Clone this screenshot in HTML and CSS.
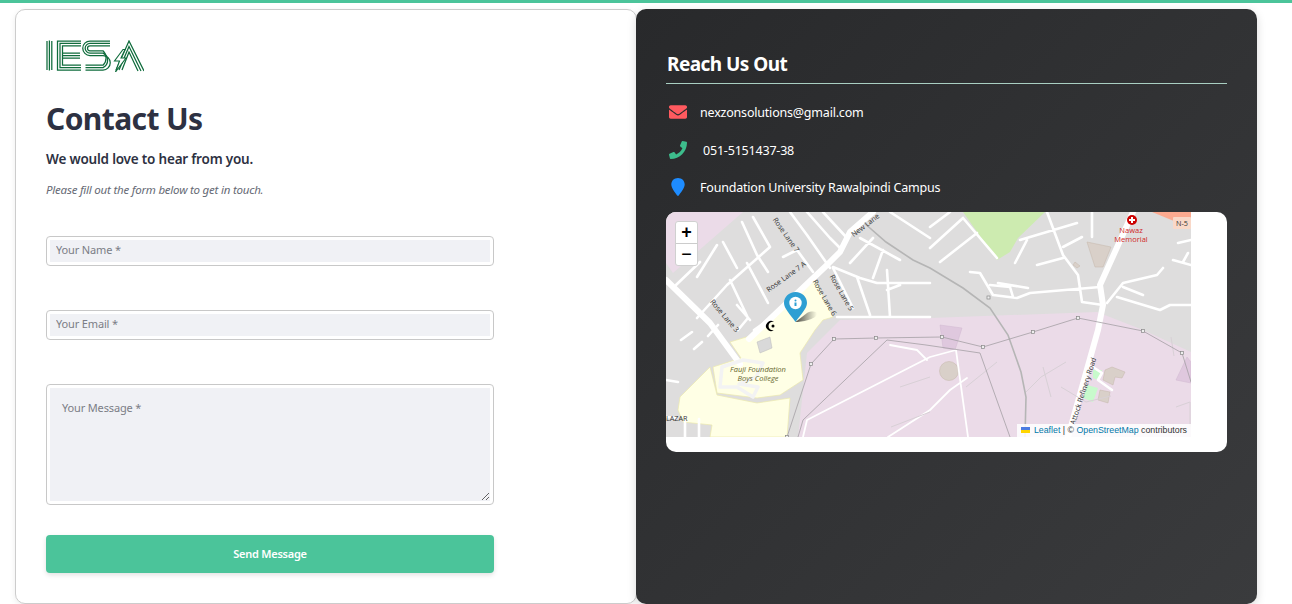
FILE: index.html
```html
<!DOCTYPE html>
<html lang="en">
<head>
<meta charset="utf-8">
<title>Contact Us</title>
<link rel="stylesheet" href="styles.css">
</head>
<body>
<main class="page">
  <section class="form-card">
    <svg class="logo" viewBox="0 0 98 32" width="98" height="32" aria-label="IESA">
      <g class="logo-lines">
        <path d="M1 1v29M3.400 .5v30M5.800 1v29"/>
        <path d="M35 1H11.500v29H35M35 3.400H14v24.200H35M35 5.800H16.500v19.400H35"/>
        <path d="M34 13.200H16.500M34 15.600H16.500M34 18H16.500"/>
        <path d="M64 1H44a5.500 5.500 0 0 0 0 14.500h13a5.500 5.500 0 0 1 0 14.500H39.500"/>
        <path d="M64 3.400H44a3.200 3.200 0 0 0 0 9.700h13a8 8 0 0 1 0 14.500H39.500"/>
        <path d="M64 5.800H44a1 1 0 0 0 0 5h13a10 10 0 0 1 0 14.400H39.500"/>
        <path d="M70 30 83 1 98 31M73 30 83 6.500 95 31M76 30 83 12 92 31"/>
      </g>
      <path class="logo-bolt" d="M77 9.500 68.500 21h5L69.500 32 80 18h-5l4-8.500z"/>
    </svg>
    <h1 class="title">Contact Us</h1>
    <p class="lead">We would love to hear from you.</p>
    <p class="note">Please fill out the form below to get in touch.</p>
    <form class="form">
      <div class="field field-name"><input class="control" type="text" placeholder="Your Name *"></div>
      <div class="field field-email"><input class="control" type="email" placeholder="Your Email *"></div>
      <div class="field field-message"><textarea class="control control-area" placeholder="Your Message *"></textarea></div>
      <button class="send" type="button">Send Message</button>
    </form>
  </section>

  <section class="info-card">
    <h2 class="info-title">Reach Us Out</h2>
    <ul class="contacts">
      <li class="contact">
        <svg class="icon icon-mail" viewBox="0 0 512 512" width="18" height="18"><path d="M502.300 190.800c3.900-3.100 9.700-.2 9.700 4.700V400c0 26.500-21.500 48-48 48H48c-26.500 0-48-21.500-48-48V195.600c0-5 5.700-7.800 9.700-4.700 22.400 17.400 52.100 39.500 154.100 113.600 21.100 15.400 56.700 47.800 92.200 47.600 35.700.3 72-32.800 92.300-47.600 102-74.100 131.600-96.300 154-113.700zM256 320c23.200.4 56.600-29.200 73.400-41.400 132.700-96.300 142.800-104.700 173.400-128.700 5.800-4.500 9.200-11.500 9.200-18.900v-19c0-26.500-21.500-48-48-48H48C21.500 64 0 85.500 0 112v19c0 7.400 3.400 14.300 9.200 18.900 30.600 23.900 40.700 32.400 173.400 128.700 16.800 12.200 50.200 41.800 73.400 41.400z"/></svg>
        <span>nexzonsolutions@gmail.com</span>
      </li>
      <li class="contact contact-phone">
        <svg class="icon icon-phone" viewBox="0 0 512 512" width="18" height="18"><path d="M493.400 24.600l-104-24c-11.300-2.600-22.900 3.300-27.500 13.900l-48 112c-4.200 9.800-1.400 21.300 6.900 28l60.600 49.600c-36 76.700-98.900 140.500-177.200 177.200l-49.600-60.600c-6.800-8.300-18.200-11.100-28-6.900l-112 48C3.900 366.500-2 378.100.6 389.400l24 104C27.100 504.200 36.700 512 48 512c256.100 0 464-207.500 464-464 0-11.200-7.700-20.900-18.600-23.400z"/></svg>
        <span>051-5151437-38</span>
      </li>
      <li class="contact contact-place">
        <svg class="icon icon-pin" viewBox="0 0 18 18" width="18" height="18"><path d="M9 0C5.200 0 2.300 2.800 2.300 6.500c0 3.400 3.900 8.200 5.800 10.900.4.600 1.300.6 1.700 0 1.900-2.700 5.900-7.500 5.900-10.900C15.700 2.800 12.800 0 9 0z"/></svg>
        <span>Foundation University Rawalpindi Campus</span>
      </li>
    </ul>
    <div class="map-box">
      <div class="map">
        <svg class="tiles" viewBox="0 0 525 225" width="525" height="225">
          <defs>
            <linearGradient id="shade" x1="0" x2="1" y1="0" y2="0">
              <stop offset="0" stop-color="#000" stop-opacity=".7"/>
              <stop offset="1" stop-color="#000" stop-opacity="0"/>
            </linearGradient>
          </defs>
          <rect class="m-base" width="525" height="225"/>
          <path class="m-pink" d="M0 0H77L7 61 0 51z"/>
          <path class="m-pink" d="M174 108 264 106 431 100 477 118 525 140V225H132L141 141z"/>
          <path class="m-green" d="M297 0H379L352 26 344 40 331 48z"/>
          <path class="m-salmon" d="M486 0 525 16V0z"/>
          <path class="m-yellow" d="M87 123 149 68 167 105 157 108 149 118 134 141 137 168 114 183 91 186 51 181 47 155 75 146 64 130z"/>
          <path class="m-yellow" d="M44 155 14 185 12 198 17 210 46 213 44 225H121L124 186 91 191 51 183z"/>
          <path class="m-tan" d="M421 30 445 35 437 55 429 55z"/>
          <path class="m-tan" d="M409 50 414 54 411 56 407 53z"/>
          <path class="m-tan" d="M439 158 446 155 459 160 456 166 449 165 447 173 437 168z"/>
          <path class="m-tan" d="M434 178 444 180 442 191 432 188z"/>
          <circle class="m-tan" cx="283" cy="159" r="9.500"/>
          <path class="m-plum" d="M274 113 296 116 289 138 277 136z"/>
          <path class="m-plum" d="M521 145 510 168 525 171V150z"/>
          <path class="m-lime" d="M427 158 436 158 432 168 427 166z"/>
          <path class="m-lime" d="M421 173 432 176 427 190 417 186z"/>
          <path class="m-rail" d="M197 10 220 30 247 48 264 56 297 76 324 96 342 123 355 160 360 185 359 225"/>
          <g class="m-road">
            <path d="M76 10 91 43 102 60M87 5 104 35M57 30 71 56M31 65 51 33M10 73 34 50M104 35 61 73 31 106M81 51 102 91M64 68 82 106 72 118M71 93 84 108M117 45 131 38 147 60"/>
            <path d="M124 0 141 23 164 56M141 0 164 26 174 36M157 0 181 26M167 55 194 66 211 71 264 71M207 26 184 51M217 38 207 66M194 26 234 48M221 58 224 105M221 78 234 73M167 56 187 96M191 65 204 103M171 105H264M224 0 264 26"/>
            <path d="M264 36 297 6M297 6 331 46M274 50 311 21M264 15 284 0"/>
            <path d="M381 0 397 43 412 63 416 90 437 93M354 28 411 11M361 28 349 51M397 35 416 25M371 53 397 46M304 60 314 61 327 83 351 86 364 81 434 75M324 73 344 75 347 85M332 71 362 76"/>
            <path d="M426 0V25M497 56 491 63 457 71 441 91M457 75 477 83M451 85 494 98 504 93 525 93M507 48 525 53M522 41 517 50M512 31 525 28"/>
            <path d="M427 155 436 161 432 168 446 178"/>
            <path d="M0 168 12 170M0 205 10 206M19 205V225M33 207V225M26 120 15 128M36 130 28 137M52 113 42 124M88 118 108 104"/>
          </g>
          <g class="m-road-thin">
            <path d="M137 225 141 208 264 145 290 138 302 225M222 225 264 198 284 178 301 166M224 133 251 138 261 148"/>
          </g>
          <g class="m-road-thick">
            <path d="M0 68 44 111 74 152"/>
            <path d="M83 127 161 53 174 40 184 20 207 0"/>
            <path d="M467 0 434 73 437 93 432 118 402 225"/>
          </g>
          <path class="m-loop" d="M56 155 54 175 71 175 87 185 92 175 73 172 90 165 97 151 77 148z"/>
          <path class="m-bldg" d="M91 130 104 125 106 136 94 141z"/>
          <path class="m-soft" d="M300 175 331 150M360 180 375 165 400 150M377 155 385 185M395 175 420 190 445 184M510 195 524 190V215M234 175 264 165M225 215 264 200"/>
          <path class="m-soft" d="M505 125 508 144"/>
          <g class="m-power">
            <path d="M121 225 145 152 168 127 210 126 276 125 317 135 367 120 412 106 477 119 516 141 525 170"/>
            <path d="M132 225 137 208 221 128 260 133 314 141 344 225"/>
          </g>
          <g class="m-nodes">
            <rect x="119.500" y="223.500" width="3" height="3"/><rect x="143.500" y="150.500" width="3" height="3"/><rect x="166.500" y="125.500" width="3" height="3"/><rect x="208.500" y="124.500" width="3" height="3"/><rect x="274.500" y="123.500" width="3" height="3"/><rect x="315.500" y="133.500" width="3" height="3"/><rect x="365.500" y="118.500" width="3" height="3"/><rect x="410.500" y="104.500" width="3" height="3"/><rect x="475.500" y="117.500" width="3" height="3"/><rect x="514.500" y="139.500" width="3" height="3"/><rect x="321" y="84" width="3" height="3"/>
          </g>
          <path class="m-crescent" d="M108 110a5 5 0 1 0 0 8 4.200 4.200 0 1 1 0-8z"/>
          <circle class="m-crescent" cx="107" cy="114" r="1.500"/>
          <circle class="m-red" cx="466" cy="8" r="5"/>
          <path class="m-cross" d="M466 5v6M463 8h6"/>
          <text class="m-label m-red-text" x="465" y="21">Nawaz</text>
          <text class="m-label m-red-text" x="465" y="30">Memorial</text>
          <rect class="m-shield" x="507" y="5" width="18" height="12" rx="1"/>
          <text class="m-street" x="510" y="14">N-5</text>
          <text class="m-label m-school" x="92" y="160">Fauji Foundation</text>
          <text class="m-label m-school" x="92" y="169">Boys College</text>
          <text class="m-street" x="0" y="209">LAZAR</text>
          <text class="m-street" transform="translate(109 6) rotate(55)" x="0" y="3">Rose Lane 7</text>
          <text class="m-street" transform="translate(101 78) rotate(-36)" x="0" y="3">Rose Lane 7 A</text>
          <text class="m-street" transform="translate(149 68) rotate(60)" x="0" y="3">Rose Lane 6</text>
          <text class="m-street" transform="translate(166 63) rotate(60)" x="0" y="3">Rose Lane 5</text>
          <text class="m-street" transform="translate(46 88) rotate(50)" x="0" y="3">Rose Lane 3</text>
          <text class="m-street" transform="translate(186 23) rotate(-38)" x="0" y="3">New Lane</text>
          <text class="m-street" transform="translate(406 212) rotate(-72)" x="0" y="3">Attock Refinery Road</text>
        </svg>
        <div class="zoom">
          <span class="zoom-btn">+</span>
          <span class="zoom-btn">−</span>
        </div>
        <svg class="marker" viewBox="0 0 56 34" width="56" height="34">
          <path class="marker-shadow" d="M12.500 30 24 21C28 19 34 19 34 22 34 26 22 30 12.500 30z"/>
          <path class="marker-pin" d="M12.500 0C5.800 0 1 5 1 11c0 5.500 6 11 11.500 19C18 22 24 16.500 24 11 24 5 19.200 0 12.500 0z"/>
          <circle class="marker-hole" cx="12.500" cy="11" r="6.200"/>
          <circle class="marker-i" cx="12.500" cy="8.600" r="1"/>
          <path class="marker-i-bar" d="M12.500 10.500v3.500"/>
        </svg>
        <div class="attribution">
          <svg class="flag" viewBox="0 0 12 8" width="9" height="6"><rect class="flag-b" width="12" height="4"/><rect class="flag-y" y="4" width="12" height="4"/></svg>
          <a class="attr-link">Leaflet</a> <span class="attr-sep">|</span> © <a class="attr-link">OpenStreetMap</a> contributors
        </div>
      </div>
    </div>
  </section>
</main>
</body>
</html>
```

FILE: styles.css
```css
* { box-sizing: border-box; }
html, body { margin: 0; height: 604px; overflow: hidden; background: #fff; }
body { font-family: "Noto Sans", "Open Sans", sans-serif; color: #2d3142; }

.page {
  height: 604px;
  border-top: 3px solid #4bc49a;
  padding: 6px 35px 0 15px;
  display: grid;
  grid-template-columns: 622px 620px;
}

.form-card {
  height: 595px;
  background: #fff;
  border: 1px solid #ccc;
  border-radius: 10px;
  padding: 30px 30px 0;
  box-shadow: 0 2px 6px rgba(0, 0, 0, .08);
}
.info-card {
  height: 595px;
  margin-left: -1px;
  background: linear-gradient(135deg, #28292b 0%, #3a3b3d 100%);
  border-radius: 10px;
  padding: 40px 30px 0;
  color: #fff;
  box-shadow: 0 3px 10px rgba(0, 0, 0, .15);
  position: relative;
}

.logo { display: block; }
.logo-lines { fill: none; stroke: #0f6c3c; stroke-width: 1.250; }
.logo-bolt { fill: #fff; stroke: #0f6c3c; stroke-width: 1.100; }

.title { margin: 27px 0 0; font-size: 30px; line-height: 40px; font-weight: 700; letter-spacing: -.6px; color: #2d3142; }
.lead { margin: 10px 0 0; font-size: 13.500px; line-height: 20px; font-weight: 600; letter-spacing: -.2px; color: #2d3142; }
.note { margin: 13px 0 0; font-size: 11.500px; line-height: 16px; font-style: italic; letter-spacing: -.22px; color: #666a75; }

.form { width: 448px; margin-top: 38px; display: flex; flex-direction: column; }
.field { border: 1px solid #c8c8c8; border-radius: 4px; padding: 3px; background: #fff; display: flex; }
.field-name { height: 30px; }
.field-email { height: 30px; margin-top: 44px; }
.field-message { height: 121px; margin-top: 44px; }
.control {
  flex: 1;
  min-width: 0;
  border: 0;
  outline: 0;
  background: #f0f1f5;
  padding: 0 6px 3px;
  font: 400 11px "Noto Sans", sans-serif;
  letter-spacing: -.15px;
  color: #2d3142;
}
.control::placeholder { color: #7b7d85; opacity: 1; }
.control-area { padding: 12px 12px; resize: vertical; }

.send {
  margin-top: 30px;
  height: 38px;
  border: 0;
  border-radius: 4px;
  background: #4bc49a;
  color: #fff;
  padding: 0 0 2px;
  font: 600 11px "Noto Sans", sans-serif;
  letter-spacing: -.25px;
  box-shadow: 0 2px 5px rgba(0, 0, 0, .12);
}

.info-title {
  margin: 0;
  height: 35px;
  line-height: 30px;
  font-size: 19px;
  font-weight: 700;
  letter-spacing: -.55px;
  color: #fff;
  padding-left: 1px;
  border-bottom: 1px solid #a9cfc2;
}
.contacts { list-style: none; margin: 0; padding: 0; }
.contact { display: flex; align-items: center; gap: 13px; height: 20px; margin-top: 18px; padding-left: 3px; font-size: 12.500px; letter-spacing: -.2px; color: #fff; }
.contact-phone { gap: 16px; }
.contact-place { margin-top: 17px; }
.icon { flex: none; }
.icon-mail { fill: #ff5a5f; }
.icon-phone { fill: #3dbd8c; }
.icon-pin { fill: #1e8cff; }

.map-box { width: 561px; height: 240px; margin-top: 15px; background: #fff; border-radius: 10px; overflow: hidden; }
.map { width: 525px; height: 225px; position: relative; overflow: hidden; }
.tiles { display: block; }

.m-base { fill: #dedddd; }
.m-pink { fill: #ebdbe8; }
.m-green { fill: #cdebb0; }
.m-salmon { fill: #fcaa90; }
.m-yellow { fill: #ffffe5; stroke: #ece9ae; stroke-width: .7; }
.m-tan { fill: #d9d0c9; stroke: #c4b6ab; stroke-width: .5; }
.m-plum { fill: #dfc8de; stroke: #d0b8d0; stroke-width: .5; }
.m-lime { fill: #c8facc; }
.m-rail { fill: none; stroke: #b5b5b5; stroke-width: 1.600; }
.m-road path { fill: none; stroke: #fff; stroke-width: 2.600; stroke-linecap: round; stroke-linejoin: round; }
.m-road-thin path { fill: none; stroke: #fff; stroke-width: 1.800; stroke-linecap: round; stroke-linejoin: round; }
.m-road-thick path { fill: none; stroke: #fff; stroke-width: 6; stroke-linecap: round; stroke-linejoin: round; }
.m-loop { fill: none; stroke: #f3f3f3; stroke-width: 3.500; stroke-linejoin: round; }
.m-bldg { fill: #d9d9d9; stroke: #bbb; stroke-width: .5; }
.m-soft { fill: none; stroke: #d8d0d6; stroke-width: 1; }
.m-power path { fill: none; stroke: #a5a0a5; stroke-width: .8; }
.m-nodes rect { fill: #eee; stroke: #888; stroke-width: .7; }
.m-crescent { fill: #000; }
.m-red { fill: #c00; }
.m-cross { fill: none; stroke: #fff; stroke-width: 2; }
.m-shield { fill: #f9d8c8; }
.m-label { font-family: "Open Sans", sans-serif; font-size: 7.500px; text-anchor: middle; }
.m-red-text { fill: #d02828; }
.m-school { fill: #66662e; font-style: italic; }
.m-street { font-family: "Open Sans", sans-serif; font-size: 7.200px; fill: #333; }

.zoom { position: absolute; left: 9px; top: 9px; width: 23px; height: 45px; background: #fff; border: 1px solid #d0d0d0; border-radius: 3px; display: flex; flex-direction: column; }
.zoom-btn { flex: 1; display: flex; align-items: center; justify-content: center; font: 700 18px "Liberation Sans", sans-serif; color: #000; }
.zoom-btn + .zoom-btn { border-top: 1px solid #ccc; font-weight: 400; }

.marker { position: absolute; left: 117px; top: 80px; }
.marker-shadow { fill: url(#shade); }
.marker-pin { fill: #2e9fd3; }
.marker-hole { fill: #fff; }
.marker-i { fill: #2e9fd3; }
.marker-i-bar { stroke: #2e9fd3; stroke-width: 2; }

.attribution {
  position: absolute;
  right: 0;
  bottom: 0;
  height: 13px;
  padding: 0 4px;
  background: rgba(255, 255, 255, .85);
  font: 400 8.800px/13px "Liberation Sans", sans-serif;
  color: #333;
  white-space: nowrap;
}
.flag { margin-right: 1px; }
.flag-b { fill: #4c7be1; }
.flag-y { fill: #ffd500; }
.attr-link { color: #0078a8; }
```
